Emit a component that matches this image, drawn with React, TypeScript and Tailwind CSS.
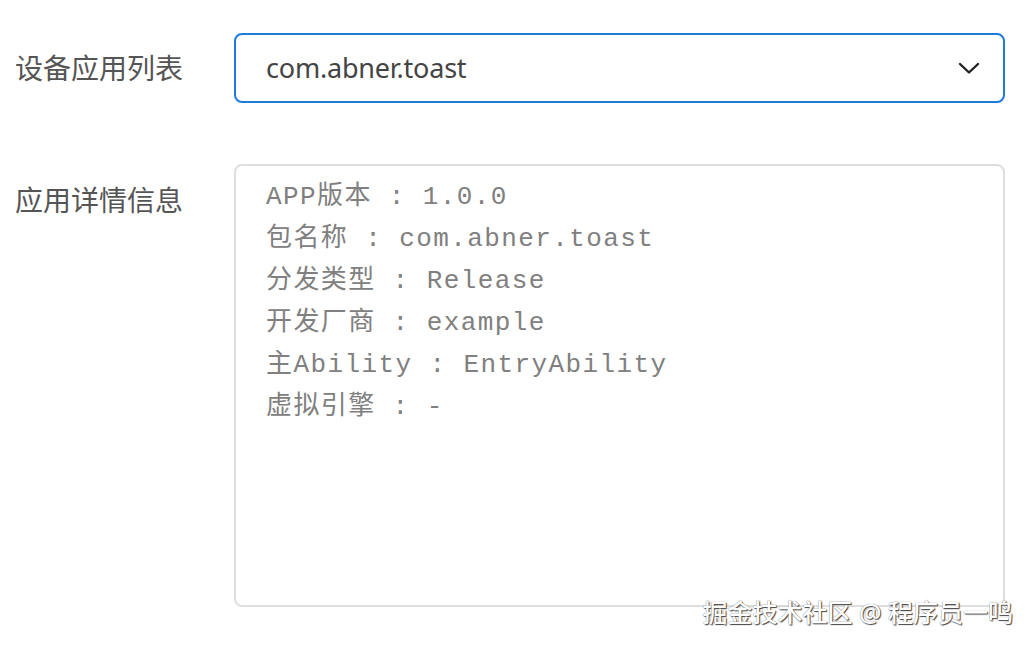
import React from 'react';

const infoRows: [string, string][] = [
  ['APP版本', '1.0.0'],
  ['包名称', 'com.abner.toast'],
  ['分发类型', 'Release'],
  ['开发厂商', 'example'],
  ['主Ability', 'EntryAbility'],
  ['虚拟引擎', '-'],
];

function ChevronDown() {
  return (
    <svg width="24" height="24" viewBox="0 0 24 24" fill="none" stroke="#222" strokeWidth="2.4" strokeLinecap="round" strokeLinejoin="round">
      <path d="M3 8l9 8.5L21 8" />
    </svg>
  );
}

export default function App() {
  return (
    <div
      className="relative w-[1034px] h-[646px] bg-white overflow-hidden"
      style={{ fontFamily: '"Noto Sans", "Noto Sans CJK SC", sans-serif' }}
    >
      <div className="flex flex-col gap-[61px] pt-[33px] pl-[15px] pr-[29px]">
        <div className="flex items-center">
          <p className="w-[219px] text-[28px] text-[#555] leading-none">设备应用列表</p>
          <div className="flex-1 h-[70px] flex items-center justify-between border-2 border-[#1f7ae0] rounded-[8px] pl-[30px] pr-[22px]">
            <span className="text-[27px] text-[#444] tracking-[-0.2px]">com.abner.toast</span>
            <ChevronDown />
          </div>
        </div>
        <div className="flex items-start">
          <p className="w-[219px] text-[28px] text-[#555] leading-none pt-[22px]">应用详情信息</p>
          <div className="flex-1 h-[443px] border-2 border-[#dedede] rounded-[8px] pl-[30px] pt-[10px]">
            {infoRows.map(([k, v]) => (
              <p
                key={k}
                className="text-[26px] leading-[42px] text-[#808080] tracking-[1.4px] whitespace-pre"
                style={{ fontFamily: '"Liberation Mono", "Noto Sans CJK SC", monospace' }}
              >
                {k} : {v}
              </p>
            ))}
          </div>
        </div>
      </div>
      <p
        className="absolute right-[21px] bottom-[21px] text-[25px] font-medium text-white leading-none"
        style={{ textShadow: '1px 1px 1px #444, 0 0 1px #666' }}
      >
        掘金技术社区 @ 程序员一鸣
      </p>
    </div>
  );
}
